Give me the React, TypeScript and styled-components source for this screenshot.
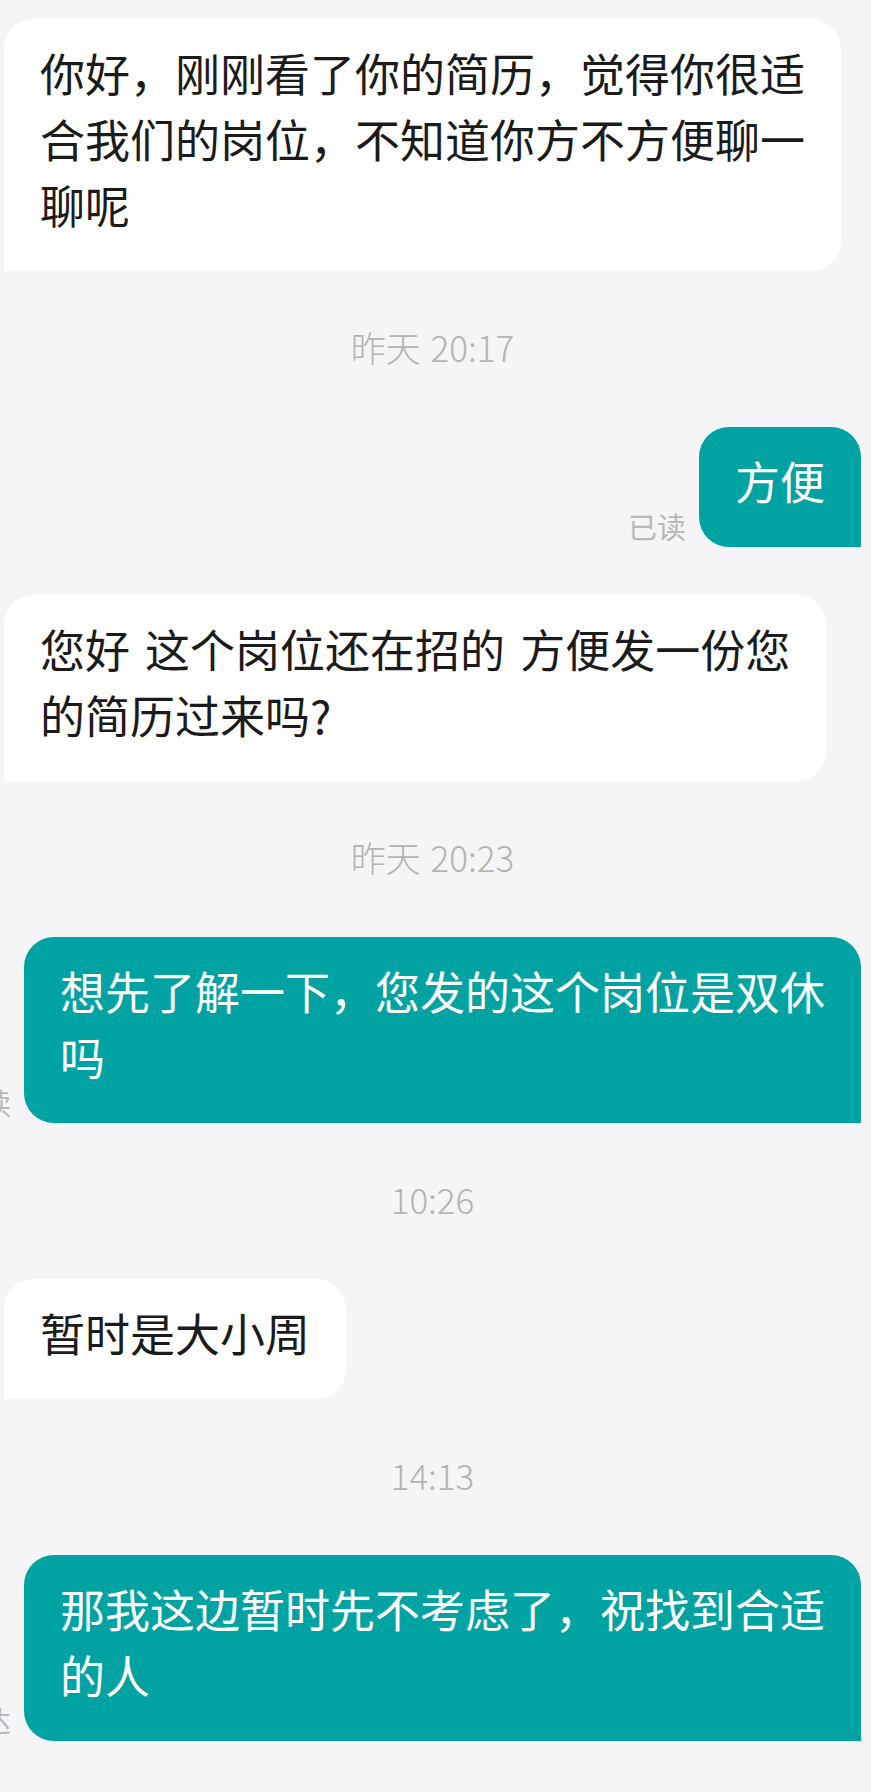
import React from "react";
import styled, { createGlobalStyle } from "styled-components";

type Message =
  | { kind: "time"; text: string }
  | { kind: "msg"; out: boolean; lines: string[]; status?: string };

const messages: Message[] = [
  {
    kind: "msg",
    out: false,
    lines: ["你好，刚刚看了你的简历，觉得你很适", "合我们的岗位，不知道你方不方便聊一", "聊呢"],
  },
  { kind: "time", text: "昨天 20:17" },
  { kind: "msg", out: true, lines: ["方便"], status: "已读" },
  {
    kind: "msg",
    out: false,
    lines: ["您好 这个岗位还在招的 方便发一份您", "的简历过来吗?"],
  },
  { kind: "time", text: "昨天 20:23" },
  {
    kind: "msg",
    out: true,
    lines: ["想先了解一下，您发的这个岗位是双休", "吗"],
    status: "已读",
  },
  { kind: "time", text: "10:26" },
  { kind: "msg", out: false, lines: ["暂时是大小周"] },
  { kind: "time", text: "14:13" },
  {
    kind: "msg",
    out: true,
    lines: ["那我这边暂时先不考虑了，祝找到合适", "的人"],
    status: "送达",
  },
];

export default function App() {
  return (
    <>
      <GlobalStyle />
      <ChatList>
        {messages.map((m, i) =>
          m.kind === "time" ? (
            <TimeStamp key={i}>{m.text}</TimeStamp>
          ) : (
            <Row key={i} $out={m.out}>
              {m.status && <ReadMark>{m.status}</ReadMark>}
              <Bubble $out={m.out}>{m.lines.join("\n")}</Bubble>
            </Row>
          )
        )}
      </ChatList>
    </>
  );
}

const GlobalStyle = createGlobalStyle`
  html, body {
    margin: 0;
    padding: 0;
    background-color: #f5f5f7;
    overflow-x: hidden;
  }

  body {
    font-family: "Noto Sans CJK SC", "Noto Sans", sans-serif;
  }
`;

const ChatList = styled.main`
  display: flex;
  flex-direction: column;
  gap: 48px;
  padding: 19px 10px 51px 4px;
`;

const TimeStamp = styled.div`
  text-align: center;
  font-size: 35px;
  font-weight: 300;
  line-height: 44px;
  padding: 6px 0 10px;
  color: #b3b3b3;
  word-spacing: 2px;
`;

const Row = styled.div<{ $out: boolean }>`
  display: flex;
  justify-content: ${(p) => (p.$out ? "flex-end" : "flex-start")};
  align-items: flex-end;
  gap: 13px;
`;

const ReadMark = styled.span`
  flex-shrink: 0;
  font-size: 29px;
  line-height: 29px;
  margin-bottom: 6px;
  color: #b8b8b8;
`;

const Bubble = styled.div<{ $out: boolean }>`
  flex-shrink: 0;
  white-space: pre;
  font-size: 45px;
  line-height: 66px;
  word-spacing: 5px;
  padding: 21px 36px 33px;
  border-radius: ${(p) => (p.$out ? "30px 30px 0 30px" : "30px 30px 30px 0")};
  background-color: ${(p) => (p.$out ? "#00a3a2" : "#ffffff")};
  color: ${(p) => (p.$out ? "#ffffff" : "#1b1b1b")};
`;
